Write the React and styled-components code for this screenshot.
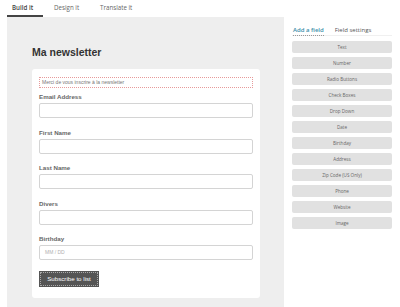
import styled, { createGlobalStyle } from "styled-components";

const GlobalStyle = createGlobalStyle`
  html, body {
    margin: 0;
    padding: 0;
    background: #ffffff;
  }
  body {
    font-family: "Open Sans", "Liberation Sans", sans-serif;
  }
`;

const Page = styled.div`
  width: 400px;
  height: 307px;
  overflow: hidden;
  display: flex;
  flex-direction: column;
  background: #ffffff;
`;

const TopTabs = styled.div`
  display: flex;
  gap: 6px;
  height: 17px;
  padding-left: 7px;
  box-sizing: border-box;
`;

const TopTab = styled.div`
  font-size: 6.2px;
  line-height: 15px;
  padding: 0 10px 0 5px;
  color: ${(props) => (props.active ? "#444" : "#666")};
  font-weight: ${(props) => (props.active ? 600 : 400)};
  border-bottom: 2px solid ${(props) => (props.active ? "#444" : "transparent")};
`;

const Main = styled.div`
  flex: 1;
  display: flex;
`;

const Canvas = styled.div`
  margin-left: 7px;
  width: 277px;
  background: #eeeeee;
  padding: 29px 0 0 25px;
  box-sizing: border-box;
`;

const Heading = styled.h1`
  margin: 0 0 10px;
  font-family: "Liberation Sans", Arial, sans-serif;
  font-size: 10.5px;
  line-height: 13px;
  font-weight: 700;
  color: #333;
`;

const Card = styled.div`
  width: 228px;
  background: #ffffff;
  border-radius: 3px;
  padding: 8px 7px 11px;
  box-sizing: border-box;
  font-family: "Liberation Sans", Arial, sans-serif;
`;

const Intro = styled.div`
  height: 11px;
  border: 1px dotted #e79a9a;
  box-sizing: border-box;
  font-size: 5px;
  line-height: 9px;
  padding-left: 2px;
  color: #777;
  margin-bottom: 5px;
`;

const Field = styled.div`
  display: flex;
  flex-direction: column;
  gap: 2px;
  margin-bottom: 10.5px;
`;

const Label = styled.div`
  font-size: 6.2px;
  line-height: 8px;
  font-weight: 700;
  color: #666;
`;

const Input = styled.div`
  height: 15px;
  border: 1px solid #d4d4d4;
  border-radius: 2px;
  box-sizing: border-box;
  background: #fff;
  font-size: 5px;
  line-height: 13px;
  padding-left: 5px;
  color: #b0b0b0;
`;

const SubmitButton = styled.div`
  margin-top: 1.5px;
  width: 60px;
  height: 16px;
  background: #555;
  outline: 1px dotted rgba(255, 255, 255, 0.5);
  outline-offset: -2px;
  color: #fff;
  font-size: 6.2px;
  line-height: 16px;
  text-align: center;
`;

const Sidebar = styled.div`
  flex: 1;
  padding: 0 8px;
`;

const SideTabs = styled.div`
  display: flex;
  gap: 11px;
  padding: 9px 0 0 1px;
  border-bottom: 1px solid #f0f0f0;
  height: 19px;
  box-sizing: border-box;
`;

const SideTab = styled.div`
  font-size: 6px;
  line-height: 8px;
  font-weight: ${(props) => (props.active ? 600 : 500)};
  height: 9px;
  color: ${(props) => (props.active ? "#3b8eaa" : "#555")};
  border-bottom: 1px dotted ${(props) => (props.active ? "#999" : "transparent")};
`;

const FieldList = styled.div`
  display: flex;
  flex-direction: column;
  gap: 4px;
  margin-top: 5px;
`;

const FieldButton = styled.div`
  width: 100px;
  height: 12px;
  background: #e1e1e1;
  border-radius: 2px;
  font-size: 4.6px;
  line-height: 12px;
  font-weight: 500;
  color: #666;
  text-align: center;
`;

const fields = [
  { label: "Email Address" },
  { label: "First Name" },
  { label: "Last Name" },
  { label: "Divers" },
  { label: "Birthday", placeholder: "MM / DD" },
];

const fieldTypes = [
  "Text",
  "Number",
  "Radio Buttons",
  "Check Boxes",
  "Drop Down",
  "Date",
  "Birthday",
  "Address",
  "Zip Code (US Only)",
  "Phone",
  "Website",
  "Image",
];

const App = () => {
  return (
    <>
      <GlobalStyle />
      <Page>
        <TopTabs>
          <TopTab active>Build it</TopTab>
          <TopTab>Design it</TopTab>
          <TopTab>Translate it</TopTab>
        </TopTabs>
        <Main>
          <Canvas>
            <Heading>Ma newsletter</Heading>
            <Card>
              <Intro>Merci de vous inscrire à la newsletter</Intro>
              {fields.map((field) => (
                <Field key={field.label}>
                  <Label>{field.label}</Label>
                  <Input>{field.placeholder}</Input>
                </Field>
              ))}
              <SubmitButton>Subscribe to list</SubmitButton>
            </Card>
          </Canvas>
          <Sidebar>
            <SideTabs>
              <SideTab active>Add a field</SideTab>
              <SideTab>Field settings</SideTab>
            </SideTabs>
            <FieldList>
              {fieldTypes.map((type) => (
                <FieldButton key={type}>{type}</FieldButton>
              ))}
            </FieldList>
          </Sidebar>
        </Main>
      </Page>
    </>
  );
};

export default App;
